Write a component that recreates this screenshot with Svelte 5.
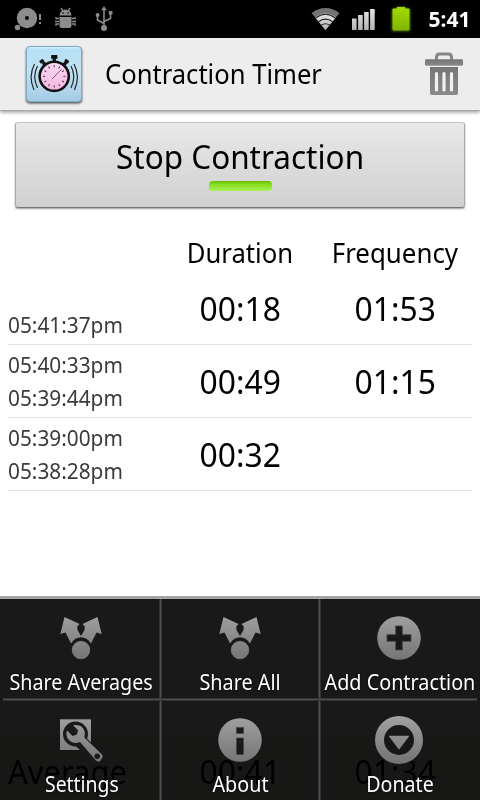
<script>
  const contractions = [
    { end: '', start: '05:41:37pm', duration: '00:18', frequency: '01:53' },
    { end: '05:40:33pm', start: '05:39:44pm', duration: '00:49', frequency: '01:15' },
    { end: '05:39:00pm', start: '05:38:28pm', duration: '00:32', frequency: '' }
  ];

  const menuRows = [
    [
      { icon: 'share', label: 'Share Averages', width: 143 },
      { icon: 'share', label: 'Share All', width: 81 },
      { icon: 'add', label: 'Add Contraction', width: 151 }
    ],
    [
      { icon: 'settings', label: 'Settings', width: 74 },
      { icon: 'about', label: 'About', width: 56 },
      { icon: 'donate', label: 'Donate', width: 67.5 }
    ]
  ];

  const ticks = Array.from({ length: 12 }, (_, i) => i * 30);

  // Condenses a label horizontally to the given width.
  function fit(node, width) {
    node.style.transform = `scaleX(${width / node.offsetWidth})`;
  }
</script>

<div class="screen">
  <div class="status">
    <svg class="notices" width="110" height="38" viewBox="10 0 110 38" fill="#8c8c8c">
      <circle cx="27" cy="18" r="10.2" />
      <circle cx="27" cy="18" r="2" fill="#000" />
      <circle cx="17.5" cy="27.5" r="2.7" />
      <path d="M39 14h2v6h-2zM39 22h2v2h-2z" />
      <path d="M59.5 15.5a6 6 0 0 1 12 0zM59.5 17h12v8.5q0 2.500-2.500 2.500h-7q-2.500 0-2.500-2.500z" />
      <path d="M61 8l2.500 3.500M70 8l-2.500 3.500M59 18.500h-3v-1.500M59 21.500h-4M59 24h-3v2M72 18.500h3v-1.500M72 21.500h4M72 24h3v2" fill="none" stroke="#8c8c8c" stroke-width="1.300" />
      <circle cx="63" cy="13" r=".8" fill="#000" /><circle cx="68" cy="13" r=".8" fill="#000" />
      <path d="M104 28V9M104 23.500l-6.500-3.500v-5M104 21.500l6.500-3v-5" fill="none" stroke="#8c8c8c" stroke-width="1.600" />
      <path d="M104 6l2.800 4.200h-5.600zM108.800 11h3.600v3.600h-3.600z" />
      <circle cx="97.600" cy="15" r="2" /><circle cx="104" cy="28" r="3" />
    </svg>
    <div class="right">
      <svg width="108" height="38" viewBox="308 0 108 38">
        <defs>
          <linearGradient id="sig" x1="0" y1="0" x2="0" y2="1"><stop offset="0" stop-color="#e6e6e6" /><stop offset="1" stop-color="#b5b5b5" /></linearGradient>
          <linearGradient id="bat" x1="0" y1="0" x2="0" y2="1"><stop offset="0" stop-color="#a1dc00" /><stop offset="1" stop-color="#7fb400" /></linearGradient>
          <filter id="glow" x="-40%" y="-40%" width="180%" height="180%"><feGaussianBlur stdDeviation="1.500" /></filter>
        </defs>
        <path d="M325.500 30L311.500 13Q325.500 3 339.500 13z" fill="#747474" />
        <path d="M325.500 30L315 17.300Q325.500 9.500 336 17.300z" fill="url(#sig)" />
        <path d="M315.500 18Q325.500 10.500 335.500 18M318.500 21.700Q325.500 16.500 332.500 21.700M321.300 25.200Q325.500 22.300 329.700 25.200" fill="none" stroke="#222" stroke-width="1.100" />
        <path d="M352 18.500h4.600V30H352zM358.100 15h4.600v15h-4.600zM364.100 12h4.600v18h-4.600zM370.100 9h4.600v21h-4.600z" fill="url(#sig)" />
        <path d="M392 9h4V7h10v2h4v22h-18z" fill="#8dc800" opacity=".65" filter="url(#glow)" />
        <path d="M393.500 8.500h3.500V7h8v1.500h3.500q1 0 1 1V29q0 1.500-1.500 1.500h-14q-1.500 0-1.500-1.500V9.500q0-1 1-1z" fill="url(#bat)" />
      </svg>
      <div class="clock"><span use:fit={42}>5:41</span></div>
    </div>
  </div>

  <header>
    <svg width="70" height="70" viewBox="19 39 70 70">
      <defs>
        <linearGradient id="tile" x1="0" y1="0" x2="0" y2="1"><stop offset="0" stop-color="#b4e0f8" /><stop offset=".5" stop-color="#c3e0ef" /><stop offset="1" stop-color="#a3cbe4" /></linearGradient>
        <linearGradient id="face" x1="0" y1="0" x2="0" y2="1"><stop offset="0" stop-color="#ffd7f4" /><stop offset="1" stop-color="#f1b9e2" /></linearGradient>
        <filter id="shade" x="-20%" y="-20%" width="140%" height="140%"><feGaussianBlur stdDeviation="1.300" /></filter>
      </defs>
      <rect x="26" y="47.500" width="56" height="56" rx="4" fill="#000" opacity=".65" filter="url(#shade)" />
      <rect x="26.500" y="46.500" width="55" height="55" rx="3.500" fill="url(#tile)" stroke="#7eaac5" />
      <path d="M29 47.800h50" stroke="#d9f1fc" stroke-width="1" />
      <path d="M51.200 55h6.200v3.800h-1.500V63h-3.200v-4.200h-1.500z" fill="#111" />
      <path d="M40 62.500l3.500-2.500M43 62.500l3 3M68.500 62.500L65 60M66 62.500l-3 3" stroke="#111" stroke-width="3.200" />
      <circle cx="54.200" cy="76.300" r="14.600" fill="url(#face)" stroke="#111" stroke-width="2.600" />
      {#each ticks as angle}
        <path d="M54.200 65v2.200" transform="rotate({angle} 54.200 76.300)" stroke="#4a3846" stroke-width="1" />
      {/each}
      <path d="M52 79l9.500-9.700" stroke="#6b4964" stroke-width=".9" />
      <path d="M37.500 66Q32 76.500 37.500 88M34.500 64Q28 76.500 34 90M71 66Q76.500 76.500 71 88M74 64Q80.500 76.500 74.500 90" fill="none" stroke="#1d2930" stroke-width="1.200" />
    </svg>
    <h1><span use:fit={217}>Contraction Timer</span></h1>
    <svg class="trash" width="40" height="46" viewBox="424 51 40 46">
      <defs><linearGradient id="bin" x1="0" y1="0" x2="0" y2="1"><stop offset="0" stop-color="#767676" /><stop offset="1" stop-color="#898989" /></linearGradient></defs>
      <path d="M436.500 60v-3q0-3 3-3h9q3 0 3 3v3" fill="none" stroke="#858585" stroke-width="3" />
      <rect x="425" y="59.200" width="38" height="6.500" rx="1.300" fill="url(#bin)" />
      <path d="M430 67h28v26q0 2-2 2h-24q-2 0-2-2z" fill="url(#bin)" />
      <path d="M436.500 73.500v16.500M444 73.500v16.500M451.500 73.500v16.500" stroke="#f1f1f1" stroke-width="3.200" stroke-linecap="round" />
    </svg>
  </header>

  <main>
    <button type="button">
      <span class="caption" use:fit={248}>Stop Contraction</span>
      <i class="led"></i>
    </button>

    <div class="heads grid">
      <span></span>
      <div><span use:fit={106.500}>Duration</span></div>
      <div><span use:fit={126.500}>Frequency</span></div>
    </div>
    {#each contractions as item}
      <div class="entry grid">
        <div class="times">
          <div>{#if item.end}<span use:fit={114.500}>{item.end}</span>{/if}</div>
          <div><span use:fit={114.500}>{item.start}</span></div>
        </div>
        <div class="value"><span use:fit={81}>{item.duration}</span></div>
        <div class="value">{#if item.frequency}<span use:fit={81}>{item.frequency}</span>{/if}</div>
      </div>
    {/each}
  </main>

  <footer class="grid">
    <div class="avg"><span use:fit={119}>Average</span></div>
    <div class="value"><span use:fit={81}>00:41</span></div>
    <div class="value"><span use:fit={81}>01:34</span></div>
  </footer>

  <nav>
    <svg class="defs" width="0" height="0">
      <defs>
        <linearGradient id="metal" gradientUnits="userSpaceOnUse" x1="0" y1="-23" x2="0" y2="23"><stop offset="0" stop-color="#a0a0a0" /><stop offset="1" stop-color="#747474" /></linearGradient>
      </defs>
    </svg>
    {#each menuRows as row}
      <div class="menurow">
        {#each row as item}
          <div class="item">
            <svg width="50" height="50" viewBox="-25 -25 50 50" fill="url(#metal)">
              {#if item.icon === 'share'}
                <path d="M-16.500-21L-1.500-14-3.800-11.500-3.500-8 0-2 3.500-8 3.800-11.500 1.500-14 16.500-21 20.700-4 15.500-5.500 10 5.500Q6-.8 0-.8T-10 5.500L-15.500-5.500-20.700-4z" />
                <circle cy="12" r="8.800" stroke="#8d8d8d" stroke-width=".6" />
              {:else if item.icon === 'add'}
                <circle r="21.800" />
                <path d="M-3.300-12H3.300V-3.300H12V3.300H3.300V12H-3.300V3.300H-12V-3.300H-3.300z" fill="#191919" stroke="#444" stroke-width=".8" />
              {:else if item.icon === 'settings'}
                <path d="M-21-20.700H10V10H-21z" />
                <circle cx="-5.500" cy="-6" r="12.500" fill="#191919" />
                <path d="M-1 1L16 17.500" stroke="#191919" stroke-width="13" />
                <path d="M-8-14.800Q1-16.500 3.500-9 4.500-5.500 3.300-2.500L21 14.500Q22.500 16.500 20.500 19L19 21Q17 22.500 15 20.500L-1 2Q-8 5-13-1-15.500-5-14-9.500L-8.500-4-4-5.500-3-9.800z" />
                <circle cx="16.200" cy="16.300" r="2.700" fill="#191919" />
              {:else if item.icon === 'about'}
                <circle r="21.800" />
                <path d="M-3.500-12.500H3.500V-6.500H-3.500zM-3.500-2H3.500V14.500H-3.500z" fill="#191919" stroke="#444" stroke-width=".8" />
              {:else}
                <path fill-rule="evenodd" d="M0-24a24 24 0 1 1 0 48a24 24 0 1 1 0-48zM0-15a15 15 0 1 0 0 30a15 15 0 1 0 0-30z" />
                <path d="M-10.500-4.300H10.500L0 9.700z" />
              {/if}
            </svg>
            <span class="label" use:fit={item.width}>{item.label}</span>
          </div>
        {/each}
      </div>
    {/each}
  </nav>
</div>

<style>
  :global(body) { margin: 0; background: #fff; }
  .screen {
    position: relative;
    display: flex;
    flex-direction: column;
    width: 480px;
    height: 800px;
    overflow: hidden;
    background: #fff;
    color: #000;
    font-family: "Noto Sans", "Open Sans", sans-serif;
    white-space: nowrap;
  }
  svg { display: block; flex: none; }
  span { display: inline-block; }
  .status {
    display: flex;
    justify-content: space-between;
    height: 38px;
    padding-left: 10px;
    background: #000;
  }
  .right { display: flex; align-items: center; }
  .clock {
    display: flex;
    justify-content: center;
    width: 64px;
    padding-left: 3px;
    box-sizing: border-box;
    color: #fff;
    font-size: 20.500px;
    font-weight: 700;
    line-height: 39px;
  }
  header {
    display: flex;
    align-items: center;
    box-sizing: border-box;
    height: 73px;
    padding: 0 16px 0 19px;
    background: #ededed;
    border-bottom: 1px solid #a8a8a8;
    box-shadow: 0 1px 4px rgba(0, 0, 0, .45);
  }
  h1 {
    flex: 1;
    margin: 0 0 0 15.500px;
    font-size: 27px;
    font-weight: 400;
    line-height: 72px;
  }
  h1 span, .times span, .avg span { transform-origin: left; }
  main { display: flex; flex-direction: column; padding: 11px 8px 0; }
  button {
    display: flex;
    flex-direction: column;
    align-items: center;
    box-sizing: border-box;
    height: 86px;
    margin: 0 7px;
    padding: 14px 0 0;
    border: 1px solid #aaa;
    border-top-color: #c6c6c6;
    border-bottom-color: #777;
    border-radius: 3px;
    background: linear-gradient(#e8e8e8, #d0d0d0);
    box-shadow: 0 1px 2px rgba(0, 0, 0, .4);
    color: #000;
    font-family: inherit;
    font-size: 33px;
    line-height: 40px;
  }
  .led {
    width: 63px;
    height: 10px;
    margin-top: 4px;
    border-radius: 4px;
    background: linear-gradient(#67b800, #83dc18 30%, #a9f25c);
  }
  .grid { display: grid; grid-template-columns: 154px 155px 155px; }
  .heads {
    height: 64px;
    font-size: 27px;
    line-height: 90px;
    text-align: center;
  }
  .entry { height: 72px; border-bottom: 1px solid #e1e1e1; }
  .times {
    padding-top: 3px;
    color: #3b3b3b;
    font-size: 22px;
  }
  .times div { height: 33px; line-height: 33px; }
  .value {
    padding-left: 1px;
    font-size: 33px;
    line-height: 74px;
    text-align: center;
  }
  footer {
    height: 65px;
    margin-top: auto;
    padding: 0 8px;
    background: #e6f0e0;
  }
  .avg { font-size: 33px; line-height: 74px; }
  footer > div { line-height: 73px; }
  nav {
    position: absolute;
    right: 0;
    bottom: 0;
    left: 0;
    height: 201px;
    padding: 0 3px;
    border-top: 3px solid #a5a5a5;
    background: rgba(0, 0, 0, .9);
    background-clip: padding-box;
  }
  .defs { position: absolute; }
  .menurow {
    display: grid;
    grid-template-columns: 156px 159px 159px;
    height: 99px;
  }
  .menurow + .menurow {
    padding-top: 3px;
    background: linear-gradient(#333, #333 1px, #505050 1px, #505050 2px, #333 2px) top / 100% 3px no-repeat;
  }
  .item {
    display: flex;
    flex-direction: column;
    align-items: center;
    padding-top: 14px;
  }
  .item + .item {
    padding-left: 3px;
    background: linear-gradient(90deg, #333, #333 1px, #505050 1px, #505050 2px, #333 2px) left / 3px 100% no-repeat;
  }
  .label {
    margin: 4px 0 0 1px;
    color: #fff;
    font-size: 21.500px;
    line-height: 30px;
    text-shadow: 0 0 2px #000;
  }
</style>
